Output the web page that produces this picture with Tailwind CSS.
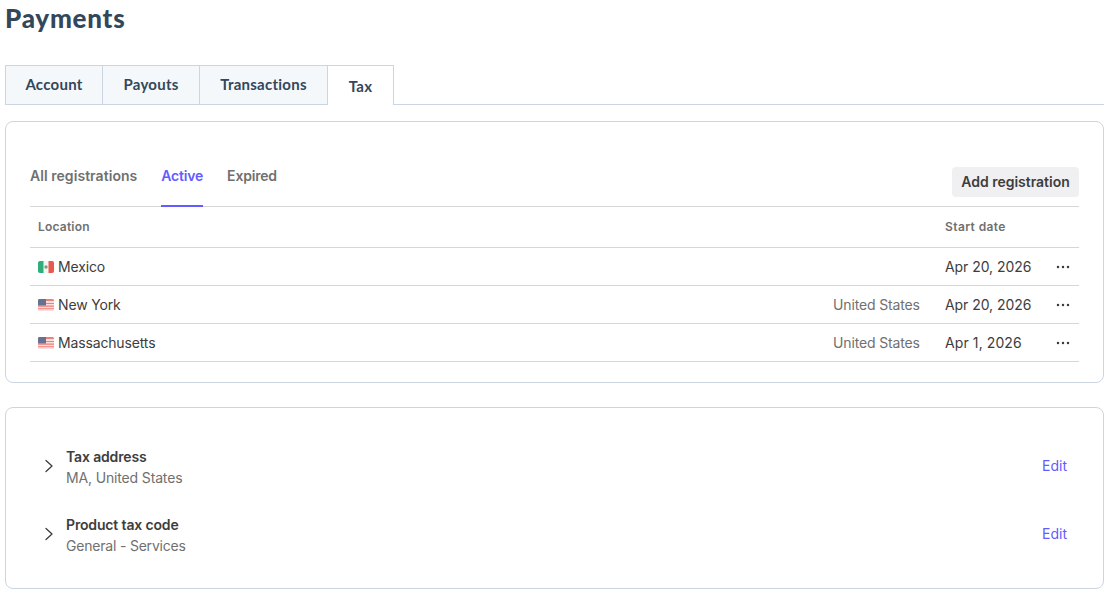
<!DOCTYPE html>
<html><head><meta charset="utf-8"><script src="https://cdn.jsdelivr.net/npm/@tailwindcss/browser@4"></script></head>
<body class="bg-white font-['Inter',sans-serif] text-[14px] text-[#3d3d3d] tracking-[-0.15px] overflow-hidden">
<div class="w-[1110px] h-[600px] pl-[5px] pr-[6px]">
  <h1 class="h-[65px] pt-[3px] text-[26px] leading-[30px] font-black text-[#33475b] font-['Lato',sans-serif] tracking-[0.75px]">Payments</h1>
  <div class="flex h-[40px] border-b border-[#cbd6e2] text-[#33475b] font-['Lato',sans-serif] font-bold text-[15px] tracking-[0.25px]">
    <div class="w-[98px] h-[40px] flex items-center justify-center bg-[#f5f8fa] border border-[#cbd6e2] pb-[1px]">Account</div>
    <div class="w-[97px] h-[40px] flex items-center justify-center bg-[#f5f8fa] border border-l-0 border-[#cbd6e2] pb-[1px]">Payouts</div>
    <div class="w-[128px] h-[40px] flex items-center justify-center bg-[#f5f8fa] border border-l-0 border-[#cbd6e2] pb-[1px]">Transactions</div>
    <div class="w-[66px] h-[40px] flex items-center justify-center bg-white border border-t border-b-0 border-l-0 border-[#cbd6e2] pt-[1px]">Tax</div>
  </div>
  <section class="mt-[16px] h-[262px] border border-[#cbd6e2] rounded-[8px] px-[24px] pt-[45px]">
    <div class="flex justify-between h-[40px] border-b border-[#d6d6d6]">
      <div class="flex gap-[24px] font-semibold h-[40px] -mt-[2px]">
        <div class="text-[#707070] tracking-[0.05px]">All registrations</div>
        <div class="text-[#635bff] border-b-2 border-[#635bff] h-[42px] tracking-[-0.2px]">Active</div>
        <div class="text-[#707070] tracking-[-0.2px]">Expired</div>
      </div>
      <button class="h-[30px] w-[127px] bg-[#f0f0f2] rounded-[4px] font-semibold text-[#3d3d3d] text-center tracking-[-0.02px] -mt-[0.5px]">Add registration</button>
    </div>
    <div class="flex items-center h-[41px] border-b border-[#d6d6d6] text-[12px] font-semibold text-[#707070] px-[8px] tracking-[0.2px]">
      <div class="flex-1">Location</div>
      <div class="w-[126px] tracking-[0.4px]">Start date</div>
    </div>
    <div class="flex items-center h-[38px] border-b border-[#d6d6d6] px-[8px]">
      <svg class="w-[16px] h-[12px] mr-[4px]" viewBox="0 0 16 12"><rect width="16" height="12" rx="2" fill="#f4f6f5"/><path d="M2 0h3.500v12H2a2 2 0 0 1-2-2V2a2 2 0 0 1 2-2z" fill="#2fae7c"/><path d="M10.500 0H14a2 2 0 0 1 2 2v8a2 2 0 0 1-2 2h-3.500z" fill="#e9594f"/><circle cx="8" cy="6" r="1.700" fill="#7f9a72"/></svg>
      <div class="flex-1">Mexico</div>
      <div class="w-[111px] tracking-[-0.06px]">Apr 20, 2026</div>
      <svg class="w-[14px] h-[4px] mr-[1px]" viewBox="0 0 14 4" fill="#3d3d3d"><circle cx="2" cy="2" r="1.250"/><circle cx="7" cy="2" r="1.250"/><circle cx="12" cy="2" r="1.250"/></svg>
    </div>
    <div class="flex items-center h-[38px] border-b border-[#d6d6d6] px-[8px]">
      <svg class="w-[16px] h-[12px] mr-[4px]" viewBox="0 0 16 12"><rect width="16" height="12" rx="1.500" fill="#f8dedc"/><path d="M0 1.500A1.500 1.500 0 0 1 1.500 0h13A1.500 1.500 0 0 1 16 1.500V2H0zM0 4h16v1H0zM0 6.500h16v1.200H0zM0 9.200h16v1H0z" fill="#ee8079"/><path d="M1.500 0H8v6.500H0v-5A1.500 1.500 0 0 1 1.500 0z" fill="#66728f"/></svg>
      <div class="flex-1">New York</div>
      <div class="w-[112px] text-[#707070]">United States</div>
      <div class="w-[111px] tracking-[-0.06px]">Apr 20, 2026</div>
      <svg class="w-[14px] h-[4px] mr-[1px]" viewBox="0 0 14 4" fill="#3d3d3d"><circle cx="2" cy="2" r="1.250"/><circle cx="7" cy="2" r="1.250"/><circle cx="12" cy="2" r="1.250"/></svg>
    </div>
    <div class="flex items-center h-[38px] border-b border-[#d6d6d6] px-[8px]">
      <svg class="w-[16px] h-[12px] mr-[4px]" viewBox="0 0 16 12"><rect width="16" height="12" rx="1.500" fill="#f8dedc"/><path d="M0 1.500A1.500 1.500 0 0 1 1.500 0h13A1.500 1.500 0 0 1 16 1.500V2H0zM0 4h16v1H0zM0 6.500h16v1.200H0zM0 9.200h16v1H0z" fill="#ee8079"/><path d="M1.500 0H8v6.500H0v-5A1.500 1.500 0 0 1 1.500 0z" fill="#66728f"/></svg>
      <div class="flex-1">Massachusetts</div>
      <div class="w-[112px] text-[#707070]">United States</div>
      <div class="w-[111px] tracking-[0.1px]">Apr 1, 2026</div>
      <svg class="w-[14px] h-[4px] mr-[1px]" viewBox="0 0 14 4" fill="#3d3d3d"><circle cx="2" cy="2" r="1.250"/><circle cx="7" cy="2" r="1.250"/><circle cx="12" cy="2" r="1.250"/></svg>
    </div>
  </section>
  <section class="mt-[24px] h-[182px] border border-[#cbd6e2] rounded-[8px] pl-[37px] pr-[36px] pt-[37px] flex flex-col gap-[26px]">
    <div class="flex items-center h-[42px]">
      <svg class="w-[10px] h-[14px] mr-[12px] ml-[1px]" viewBox="0 0 10 14" fill="none" stroke="#3d3d3d" stroke-width="1.300" stroke-linecap="round" stroke-linejoin="round"><path d="M2 1.500 8 7l-6 5.500"/></svg>
      <div class="flex-1 leading-[21px] pt-[2px]"><div class="font-semibold">Tax address</div><div class="text-[#707070]">MA, United States</div></div>
      <a class="text-[#635bff] -mt-[2px] tracking-[0px]">Edit</a>
    </div>
    <div class="flex items-center h-[42px]">
      <svg class="w-[10px] h-[14px] mr-[12px] ml-[1px]" viewBox="0 0 10 14" fill="none" stroke="#3d3d3d" stroke-width="1.300" stroke-linecap="round" stroke-linejoin="round"><path d="M2 1.500 8 7l-6 5.500"/></svg>
      <div class="flex-1 leading-[21px] pt-[2px]"><div class="font-semibold">Product tax code</div><div class="text-[#707070] tracking-[-0.2px]">General - Services</div></div>
      <a class="text-[#635bff] -mt-[2px] tracking-[0px]">Edit</a>
    </div>
  </section>
</div>
</body></html>
